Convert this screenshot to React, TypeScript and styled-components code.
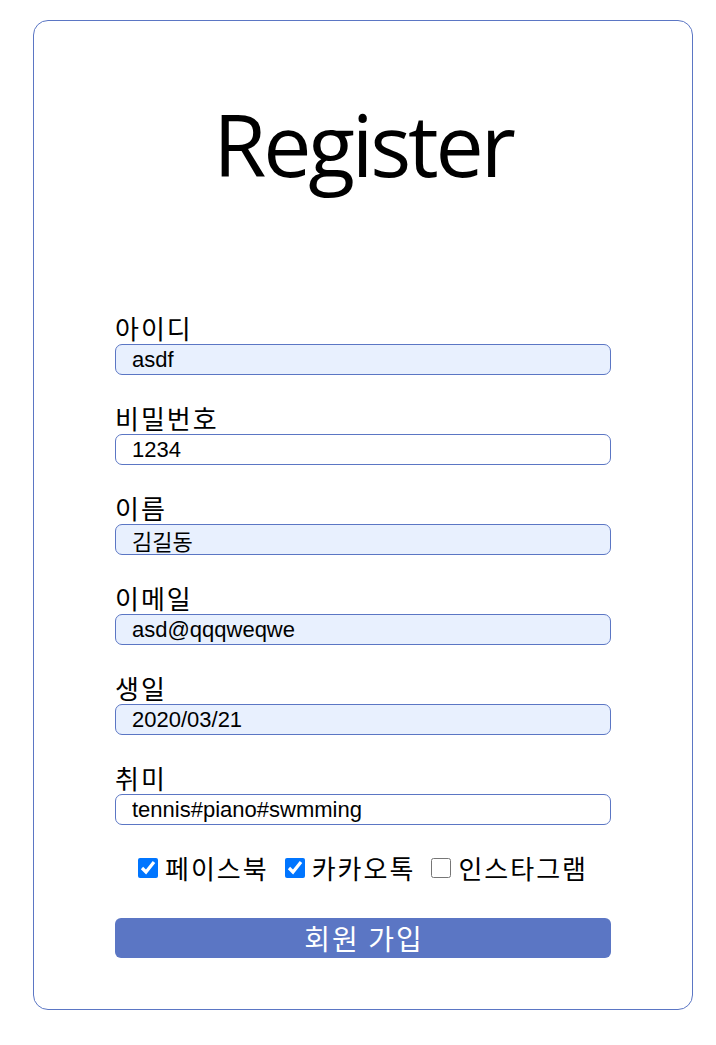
import { createGlobalStyle } from 'styled-components';
import styled from 'styled-components';

const GlobalStyle = createGlobalStyle`
  body {
    margin: 0;
    background: #ffffff;
    font-family: "Liberation Sans", "Noto Sans CJK KR", sans-serif;
  }
`;

const Page = styled.div`
  padding: 20px 0 20px 33px;
`;

const Card = styled.form`
  width: 660px;
  box-sizing: border-box;
  border: 1px solid #5b76c4;
  border-radius: 15px;
  padding: 63px 81px 51px;
  display: flex;
  flex-direction: column;
`;

const Title = styled.h1`
  margin: 0 0 108px;
  text-align: center;
  font-family: "Open Sans", "Noto Sans", sans-serif;
  font-weight: 400;
  font-size: 86px;
  line-height: 120px;
  letter-spacing: -3.2px;
  color: #000;
`;

const Field = styled.div`
  display: flex;
  flex-direction: column;
  margin-bottom: 27px;
`;

const Label = styled.label`
  font-family: "Noto Sans CJK KR", sans-serif;
  font-size: 26px;
  line-height: 32px;
  letter-spacing: 2px;
  color: #000;
`;

const Input = styled.input<{ $filled?: boolean }>`
  height: 31px;
  box-sizing: border-box;
  border: 1px solid #5b76c4;
  border-radius: 7px;
  padding: 0 16px;
  background: ${(p) => (p.$filled ? '#e8f0fe' : '#ffffff')};
  font-family: "Liberation Sans", "Noto Sans CJK KR", sans-serif;
  font-size: 22px;
  color: #000;
  outline: none;
`;

const Options = styled.div`
  display: flex;
  justify-content: center;
  align-items: center;
  gap: 16px;
  margin: 0 0 34px;
`;

const Option = styled.label`
  display: flex;
  align-items: center;
  gap: 7px;
  font-family: "Noto Sans CJK KR", sans-serif;
  font-size: 26px;
  line-height: 32px;
  letter-spacing: 2px;
  color: #000;
`;

const Check = styled.input`
  width: 20px;
  height: 20px;
  margin: 0;
  accent-color: #0075ff;
`;

const Submit = styled.button`
  height: 40px;
  border: none;
  border-radius: 6px;
  background: #5b76c4;
  color: #fff;
  font-family: "Noto Sans CJK KR", sans-serif;
  font-size: 28px;
  line-height: 40px;
  letter-spacing: 2px;
  padding: 0 0 0 2px;
`;

const fields = [
  { label: '아이디', value: 'asdf', filled: true },
  { label: '비밀번호', value: '1234', filled: false },
  { label: '이름', value: '김길동', filled: true },
  { label: '이메일', value: 'asd@qqqweqwe', filled: true },
  { label: '생일', value: '2020/03/21', filled: true },
  { label: '취미', value: 'tennis#piano#swmming', filled: false },
];

const options = [
  { label: '페이스북', checked: true },
  { label: '카카오톡', checked: true },
  { label: '인스타그램', checked: false },
];

export default function App() {
  return (
    <>
      <GlobalStyle />
      <Page>
        <Card onSubmit={(e) => e.preventDefault()}>
          <Title>Register</Title>
          {fields.map((f) => (
            <Field key={f.label}>
              <Label>{f.label}</Label>
              <Input $filled={f.filled} defaultValue={f.value} />
            </Field>
          ))}
          <Options>
            {options.map((o) => (
              <Option key={o.label}>
                <Check type="checkbox" defaultChecked={o.checked} />
                {o.label}
              </Option>
            ))}
          </Options>
          <Submit type="submit">회원 가입</Submit>
        </Card>
      </Page>
    </>
  );
}
